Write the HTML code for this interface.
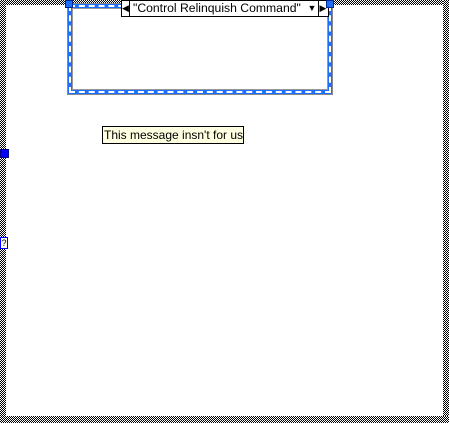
<!DOCTYPE html>
<html><head><style>
*{margin:0;padding:0;box-sizing:border-box}
body{width:449px;height:423px;position:relative;background:#fff;overflow:hidden;font-family:"Liberation Sans",sans-serif}
.ck{position:absolute;background:repeating-conic-gradient(#000 0 25%,#fff 0 50%) 0 0/2px 2px}
.abs{position:absolute}
</style></head><body>
<div class="ck" style="left:0;top:0;width:449px;height:5px"></div>
<div class="ck" style="left:0;top:0;width:6px;height:423px"></div>
<div class="ck" style="left:443px;top:0;width:6px;height:423px"></div>
<div class="ck" style="left:0;top:416px;width:449px;height:7px"></div>
<div class="abs" style="left:6px;top:5px;width:437px;height:411px;background:#fff"></div>

<!-- case frame -->
<div class="abs" style="left:67px;top:3px;width:266px;height:92px;border:1px solid #888;background:#fff"></div>
<div class="abs" style="left:68px;top:4px;width:264px;height:90px;border:4px solid #1f6fff"></div>
<div class="abs" style="left:69px;top:5px;width:262px;height:88px;border:2px dashed #fff"></div>
<div class="abs" style="left:72px;top:8px;width:256px;height:82px;border:1px solid #999;background:#fff"></div>

<!-- selector -->
<div class="abs" style="left:121px;top:0;width:208px;height:17px;background:#fff;border:1px solid #000"></div>
<div class="abs" style="left:122px;top:0;width:8px;height:16px;border-right:1px solid #000;font-size:9px;line-height:16px;text-align:center">◀</div>
<div class="abs" style="left:133px;top:0;width:172px;height:16px;font-size:12.2px;line-height:16px;color:#000;white-space:nowrap">"Control Relinquish Command"</div>
<div class="abs" style="left:306px;top:0;width:12px;height:16px;font-size:9px;line-height:16px;text-align:center">▼</div>
<div class="abs" style="left:318px;top:0;width:9px;height:16px;border-left:1px solid #000;font-size:9px;line-height:16px;text-align:center">▶</div>

<div class="abs" style="left:65px;top:0;width:8px;height:8px;background:#1f6fff;border:1px solid #00288a"></div>
<div class="abs" style="left:326px;top:0;width:8px;height:8px;background:#1f6fff;border:1px solid #00288a"></div>

<!-- tooltip -->
<div class="abs" style="left:102px;top:126px;width:142px;height:18px;background:#ffffe1;border:1px solid #000;font-size:12px;line-height:16px;padding-left:1px;white-space:nowrap">This message insn't for us</div>

<div class="abs" style="left:0;top:149px;width:9px;height:9px;background:#0000ff;border:1px solid #000080"></div>
<div class="abs" style="left:0;top:237px;width:8px;height:12px;background:#fffff0;border:1px solid #0000ff;font-size:9px;line-height:10px;text-align:center">?</div>
</body></html>
